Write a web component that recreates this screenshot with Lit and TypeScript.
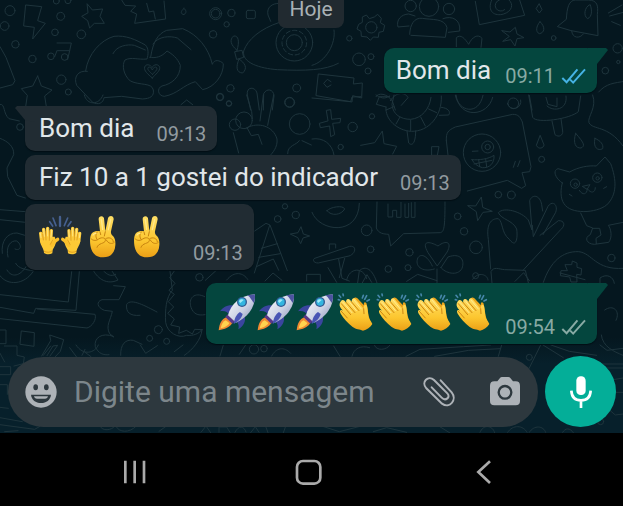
import { LitElement, html, css, svg, nothing } from "lit";
import { customElement, property } from "lit/decorators.js";

type Emoji = "hands" | "victory" | "rocket" | "clap";

interface Message {
  out: boolean;
  tail: boolean;
  time: string;
  text?: string;
  emoji?: Emoji[];
  ticks?: "read" | "delivered";
}

const messages: Message[] = [
  { out: true, tail: true, time: "09:11", text: "Bom dia", ticks: "read" },
  { out: false, tail: true, time: "09:13", text: "Bom dia" },
  { out: false, tail: false, time: "09:13", text: "Fiz 10 a 1 gostei do indicador" },
  { out: false, tail: false, time: "09:13", emoji: ["hands", "victory", "victory"] },
  {
    out: true,
    tail: true,
    time: "09:54",
    emoji: ["rocket", "rocket", "rocket", "clap", "clap", "clap", "clap"],
    ticks: "delivered",
  },
];

const skin = svg`<defs>
  <linearGradient id="skin" x1="0" y1="0" x2="0" y2="1">
    <stop offset="0" stop-color="#ffdf66"/><stop offset=".6" stop-color="#fcc62f"/><stop offset="1" stop-color="#eb9f16"/>
  </linearGradient></defs>`;

const emojiArt = {
  hands: {
    label: "Mãos para cima",
    box: "57 30 132 132",
    art: svg`${skin}
      <g stroke="#46608f" stroke-width="5" stroke-linecap="round">
        <path d="M120 39V66" stroke-width="7"/><path d="M99 42L108 65M143 42L133 65M89 53L98 66M153 53L144 66"/>
      </g>
      <g>${hand()}</g><g transform="translate(241 0) scale(-1 1)">${hand()}</g>`,
  },
  victory: {
    label: "Vitória",
    box: "189 30 132 132",
    art: svg`${skin}
      <path fill="url(#skin)" d="M213 92C209 100 209 122 214 136C220 153 232 160 250 160C272 160 285 146 286 124C287 112 285 103 279 96C274 92 272 88 273 82L281 46C282 34 267 33 264 43L256 82L252 43C250 33 235 35 236 46L240 82C230 79 217 82 213 92Z"/>
      <g fill="none" stroke="#c88410" stroke-width="3" stroke-linecap="round">
        <path d="M240 84L242 92M256 83L253 96M233 83C226 89 226 101 232 107M213 104C220 112 230 110 236 105C246 98 258 102 256 110C254 120 235 116 231 130M257 104C267 98 279 103 280 113M259 108C265 120 277 121 283 115"/>
      </g>
      <path fill="none" stroke="#ffe98e" stroke-width="4" stroke-linecap="round" d="M244 46L248 76M272 47L265 77M219 93C221 89 225 88 228 88"/>`,
  },
  rocket: {
    label: "Foguete",
    box: "54 54 117 117",
    art: svg`<defs>
        <linearGradient id="hull" x1="0" y1="0" x2="1" y2="1">
          <stop offset="0" stop-color="#ffffff"/><stop offset=".55" stop-color="#ccd2e4"/><stop offset="1" stop-color="#8289b2"/>
        </linearGradient></defs>
      <path fill="#3a459f" d="M102 91C82 88 68 97 60 109C73 106 83 111 88 119ZM133 122C139 137 132 152 115 163C119 149 112 141 105 136Z"/>
      <path fill="#f08a32" d="M80 126C64 132 58 147 56 166C73 163 91 158 98 142Z"/>
      <path fill="#ffd34f" d="M77 136C68 140 64 150 62 160C74 157 85 152 88 144Z"/>
      <path fill="#5a3788" d="M83 118L105 139L97 146L76 126Z"/>
      <path fill="url(#hull)" d="M84 121C92 88 121 61 164 58C169 91 145 127 108 143Z"/>
      <path fill="#4c53a0" d="M142 61L164 58C166 66 165 76 161 84C156 78 151 66 142 61Z"/>
      <path fill="#4854b4" d="M120 111C108 119 103 132 101 147C114 140 125 130 128 117Z"/>
      <circle cx="126" cy="81" r="15" fill="#315b91"/><circle cx="126" cy="81" r="11" fill="#34b6e0"/>
      <path fill="#9eeaf6" d="M117 79C119 72 127 71 131 75L121 84Z"/>`,
  },
  clap: {
    label: "Palmas",
    box: "405 54 117 117",
    art: svg`${skin}
      <path fill="none" stroke="#4686a9" stroke-width="5" stroke-linecap="round" d="M417 61L422 67M429 57L430 62M415 74L419 75M490 61L487 69M500 62L494 73M508 74L501 78"/>
      <path fill="#eba51b" d="M459 73C465 64 472 68 477 75L492 91C489 79 500 79 501 92L506 122L511 140L482 157Z"/>
      <path fill="url(#skin)" d="M423 78C428 71 434 77 439 83C436 72 445 68 451 76L455 81C454 69 463 66 469 75L491 101C490 88 501 85 502 98L505 124C506 132 514 139 517 147C512 157 500 164 489 167C478 162 469 164 458 156C444 145 430 130 422 116C416 106 424 102 430 108C417 96 416 87 423 78Z"/>
      <path fill="none" stroke="#cc8510" stroke-width="3" stroke-linecap="round" d="M424 86L452 119M438 82L465 113M454 80L477 107M424 109L442 129M491 101L492 116"/>
      <path fill="none" stroke="#ffea94" stroke-width="3" stroke-linecap="round" d="M429 82L456 113M445 77L469 107M462 75L484 102"/>`,
  },
};

function hand() {
  return svg`<path fill="#fcc935" d="M62 100L104 98L108 112C106 128 100 132 98 138L97 148C90 152 79 152 72 147C72 134 62 126 60 112Z"/>
    <path fill="none" stroke="#fdcb3a" stroke-width="10" stroke-linecap="round" d="M62 88L65 112M71 76L74 108M83 73L83 106M94 80L92 110"/>
    <path fill="none" stroke="#f9bf2c" stroke-width="10" stroke-linecap="round" stroke-linejoin="round" d="M113 106C105 109 101 118 95 124"/>
    <path fill="none" stroke="#ffe583" stroke-width="3" stroke-linecap="round" d="M61 87L63 101M71 75L73 97M83 72V96M95 79L93 99"/>
    <path fill="none" stroke="#d28d15" stroke-width="2" stroke-linecap="round" d="M68 90L70 108M77 82L78 108M89 82L88 109M98 108L91 121M73 142C80 146 90 146 96 141"/>`;
}

const ticks = (kind: string) => html`<svg class="ticks ${kind}" viewBox="747 201 76 54" role="img"
  aria-label=${kind === "read" ? "Lida" : "Entregue"}>
  <path d="M751 234L764 247L797 208M775 239L784 248L820 208"/></svg>`;

/* Line doodles of the chat background, each group drawn at three units per pixel. */
const wallpaper = html`<svg class="wallpaper" viewBox="0 0 623 433" preserveAspectRatio="xMinYMax slice" aria-hidden="true">
  <g transform="scale(.33333)">
    <path d="M78 15L125 20L113 62L136 70L98 117L103 82L72 78ZM262 12L277 30L308 27L300 49L313 70L283 70L269 84L263 62L245 49L263 39ZM365 0L375 16L407 18L392 34L410 42L404 70L497 57L492 3M440 10L447 36L461 33L466 57M0 140L18 172L45 242L38 254L0 264"/>
    <path d="M113 228L124 258L156 270L134 288L139 320M113 228L98 258L64 266L82 286L77 320M171 129H214L209 152H173M209 152L203 178M171 152L164 170"/>
    <circle cx="30" cy="32" r="15"/><circle cx="14" cy="78" r="13"/><circle cx="182" cy="49" r="12"/><circle cx="165" cy="97" r="10"/><circle cx="244" cy="103" r="13"/><circle cx="46" cy="133" r="11"/><circle cx="97" cy="177" r="11"/><circle cx="153" cy="169" r="10"/><circle cx="194" cy="171" r="10"/><circle cx="184" cy="239" r="14"/><circle cx="205" cy="276" r="9"/><circle cx="169" cy="3" r="9"/><circle cx="204" cy="2" r="9"/>
    <path d="M257 212C264 162 302 120 342 109C378 105 407 119 436 135C447 145 445 165 441 177C414 180 395 170 375 180C365 195 370 225 391 243C420 257 455 247 460 270C463 289 450 296 427 297L365 289L312 293C310 309 295 316 278 307L230 256C220 232 233 210 262 214M339 161C350 137 383 132 403 136L436 150M452 171C459 125 474 101 500 91L548 86C594 104 626 145 637 193C642 177 660 180 670 191C671 225 644 262 608 269L586 245C550 255 533 282 493 289C473 288 470 264 486 258C515 252 541 232 541 196C533 175 517 162 501 153C485 171 467 175 449 172M459 132C475 108 510 107 532 114L573 149"/>
    <path d="M457 234C443 222 431 212 434 201C438 190 452 194 456 203C461 192 476 191 479 202C481 213 466 223 457 234ZM457 223C448 214 440 208 445 202C450 199 455 206 457 210C460 201 469 199 471 204C472 211 464 216 457 223Z"/>
    <circle cx="647" cy="41" r="18"/><circle cx="647" cy="41" r="13"/><circle cx="694" cy="39" r="11"/><circle cx="680" cy="73" r="8"/><circle cx="639" cy="103" r="11"/><rect x="739" y="31" width="27" height="25" rx="5"/>
    <path d="M552 25C540 35 542 42 552 44C560 38 560 32 552 25M836 68C782 86 743 118 731 153C725 189 780 205 832 209C917 213 975 211 1015 190M711 151C691 134 688 119 701 108C716 106 719 125 711 151ZM705 155L726 151L731 172L711 178ZM717 177C707 201 709 218 728 219C744 204 735 189 717 177M837 10C816 10 799 22 804 45L812 64"/>
    <circle cx="883" cy="128" r="55"/><circle cx="883" cy="128" r="37" stroke-dasharray="13 8"/><circle cx="883" cy="128" r="24"/>
    <circle cx="691" cy="265" r="11"/><circle cx="660" cy="291" r="11"/><circle cx="687" cy="311" r="8"/><circle cx="890" cy="264" r="12"/><circle cx="869" cy="307" r="15"/>
    <path d="M752 330L742 285C738 259 766 259 771 279L778 330M790 330L791 281C800 264 820 267 822 287L817 330M543 314L560 300L578 314"/>
  </g>
  <g transform="translate(312) scale(.33333)">
    <path d="M164 46L172 56L187 51L197 43L208 55L205 68L218 76L214 94L201 97L199 112L184 111L175 121L165 111L148 109L147 94L135 87L140 73L151 67L151 52Z"/>
    <circle cx="178" cy="82" r="17"/><circle cx="112" cy="115" r="8"/><circle cx="141" cy="178" r="19"/><circle cx="177" cy="170" r="9"/><circle cx="168" cy="213" r="9"/><circle cx="296" cy="18" r="17"/><circle cx="411" cy="27" r="17"/><circle cx="351" cy="20" r="29"/>
    <path d="M293 103C294 73 307 52 331 55C360 60 398 54 405 83L400 112L297 106M291 78L258 81C252 60 267 43 290 42L309 48M393 56C419 46 447 58 443 93L409 97M433 140V113C446 101 459 116 470 133C480 111 498 100 510 115L507 142M490 4L502 74L638 46L623 0M539 0C524 35 548 50 575 42C600 34 606 13 591 0M562 0A17 17 0 1 0 578 29M737 79L763 58C765 22 771 1 790 0H829C857 1 859 17 856 44L858 107L778 92ZM779 93C781 115 803 117 814 102M835 15C841 32 840 50 827 56C813 48 818 21 832 15Z"/>
    <path d="M570 92L594 96L610 82L615 102L636 113L615 116L609 138L596 119L572 124L591 110ZM684 65C672 79 670 96 682 101C697 99 702 82 684 65M682 12L690 29L682 39L673 27Z"/><circle cx="725" cy="114" r="7"/><circle cx="917" cy="145" r="14"/><circle cx="880" cy="212" r="10"/><circle cx="919" cy="186" r="5"/>
    <path d="M20 222L126 234L124 252L151 249L149 294L122 287L120 306L13 287ZM57 245L46 238L35 250L45 262L57 255M192 290C199 277 225 280 241 303L250 330M235 302C252 274 280 276 288 293L268 316M430 286C440 336 500 348 513 286M586 310A20 20 0 1 0 626 300M652 286L660 330M735 294V320L708 313L702 292M860 276C882 250 908 249 938 244M889 39L930 15M893 48L934 37M899 65L925 76"/>
    <path d="M66 90C72 130 42 185 0 196"/>
  </g>
  <g transform="translate(312 95) scale(.33333)">
    <path d="M0 9L116 20L120 6L146 5M44 46L56 44L59 73L86 70L84 83L62 85L68 119L56 125L53 93L25 98L22 85L47 78ZM146 151L188 143L211 108L216 146L254 154L242 177M192 0C215 15 223 8 232 3M222 36L193 28L202 5L233 5M222 36C218 73 256 107 298 109C351 110 391 62 388 3M246 0L240 28C242 59 267 73 296 73C329 70 353 42 357 7M246 35L222 45M264 66L252 87M296 75V107M326 66L340 93M350 42L374 53M285 108L290 144C300 154 311 146 311 108M382 61L410 60C417 50 408 39 388 37M432 0C442 75 529 64 542 7"/>
    <circle cx="180" cy="64" r="8"/><circle cx="122" cy="96" r="14"/><circle cx="86" cy="156" r="8"/><circle cx="604" cy="25" r="16"/><circle cx="689" cy="193" r="9"/><circle cx="510" cy="173" r="56"/><circle cx="527" cy="156" r="18"/><circle cx="527" cy="156" r="8"/>
    <path d="M0 132C35 126 61 148 66 180M360 155H381L376 181H360ZM403 137C402 112 408 106 430 96L602 58C620 58 624 66 631 81L657 215L653 230L630 233L641 272L629 280L586 256L466 288M403 137L408 180M481 169L498 168M480 194C500 196 530 192 546 181C548 205 532 220 511 218C496 214 486 206 480 194ZM486 207L540 196M500 194L503 215M521 192L524 215M604 217L610 199M617 215L624 197M650 0L662 67C673 87 774 72 799 50L806 3M720 78L729 119C741 129 754 120 752 108L747 71M762 3C768 45 724 51 705 33M684 122L673 151C680 165 695 159 696 151ZM791 115C782 145 791 160 807 159C819 153 819 147 791 115ZM849 130C842 158 858 169 872 161C875 149 867 138 849 130ZM842 0C856 38 825 66 831 83C842 106 888 89 933 153"/>
    <path d="M751 264C728 248 722 226 738 221L773 231C799 216 830 211 853 213L879 186L896 206C914 255 916 299 884 330C852 355 776 359 756 326C744 310 746 280 751 264ZM802 286C812 302 825 299 826 281C837 297 850 293 850 278M812 274L834 269L826 282ZM772 298L780 303M875 280L884 275"/>
    <circle cx="789" cy="266" r="14"/><circle cx="856" cy="248" r="14"/><circle cx="791" cy="269" r="5"/><circle cx="857" cy="250" r="5"/>
    <path d="M806 354L824 392L842 399L835 419C815 428 824 447 847 448L890 442C902 427 897 401 889 391L933 382M842 400H863L867 420L852 430L853 446M468 332L491 333L508 306L512 337L541 349L513 352L497 377L493 351ZM195 321L193 399C200 416 215 417 230 418L236 453L275 416L385 413C396 410 399 400 399 321M228 327V366H242V346H254V367H267V322M279 327V367H290V325M298 323V367H309V322M0 352C22 411 140 425 142 325M45 347C58 365 88 360 98 342C94 330 55 335 45 347Z"/>
    <path d="M536 522L529 433C522 388 537 370 559 371C574 382 567 413 592 433C616 465 617 419 614 402C602 375 568 374 559 353C575 335 628 349 649 375L660 405L653 317C661 296 684 300 689 329L692 348M661 391L664 425L708 334C722 314 739 330 731 352L693 419M684 421L739 377C757 376 761 391 747 403L633 526M540 565L537 530C545 514 560 522 577 524L640 526L649 563"/>
    <path d="M375 512L348 473C327 436 351 438 378 453C403 434 421 441 406 470ZM367 522C328 534 307 511 318 488C329 472 349 487 361 513M387 518L408 486C446 472 459 496 450 520C436 546 398 533 387 518ZM375 522V565M8 490L113 454C136 451 131 477 111 483L19 504C0 504 3 490 8 490M52 463V447H71V459M80 493L90 550L112 558M98 490L82 548M48 518L74 562M136 570L142 527C160 511 182 520 196 567M150 565L165 539L179 562M694 562C715 500 751 468 800 470C841 474 850 526 933 520M760 509H779L781 498L795 504V517L809 521L807 540L794 538L795 561H777L773 546L745 542L747 527L765 527Z"/>
    <circle cx="559" cy="299" r="10"/><circle cx="598" cy="300" r="12"/><circle cx="437" cy="364" r="10"/><circle cx="456" cy="409" r="11"/><circle cx="492" cy="457" r="19"/><circle cx="164" cy="406" r="16"/><circle cx="176" cy="463" r="10"/><circle cx="292" cy="472" r="11"/><circle cx="229" cy="522" r="10"/><circle cx="288" cy="518" r="9"/><circle cx="491" cy="542" r="9"/><circle cx="898" cy="489" r="11"/>
  </g>
  <g transform="translate(0 95) scale(.33333)">
    <path d="M0 28C17 26 8 55 27 71L58 78M0 130C24 139 43 155 41 179L21 219L23 245L51 301L76 309M0 344L76 350M0 374L76 382M253 0C260 32 298 31 309 0M7 475C2 439 22 413 51 414L78 422M24 486C16 455 32 435 50 438C69 451 61 470 45 462M47 505C56 522 79 524 99 527"/>
    <circle cx="60" cy="96" r="10"/><circle cx="660" cy="6" r="10"/><circle cx="687" cy="25" r="8"/><circle cx="869" cy="22" r="14"/><circle cx="705" cy="89" r="17"/><circle cx="732" cy="76" r="25"/><circle cx="899" cy="87" r="31"/>
    <path d="M740 0L755 50L757 71M821 0L803 91M790 0L780 78M700 113L716 174M741 98C775 80 820 93 831 132C834 157 816 175 811 181M741 98L754 122L775 118L786 148M863 176C862 150 890 151 898 137M906 137L934 150"/>
    <circle cx="855" cy="334" r="8"/><circle cx="833" cy="372" r="10"/><circle cx="887" cy="360" r="11"/>
    <path d="M872 417L894 413L903 395L910 417L929 423L909 429L902 446L894 429ZM764 408L798 385L810 390L862 527M809 391L763 534M784 460L832 446M776 487L841 476M769 515L820 492L836 526"/>
  </g>
  <g transform="translate(0 260) scale(.33333)">
    <path d="M0 47C22 78 73 75 99 35M21 30C35 55 61 48 78 20M0 104L205 126L215 35M0 142L101 160L107 145L228 151L238 35M112 147L285 163C291 178 276 200 261 204L0 176M0 210H18V251H0M65 213L103 218L102 259L61 253ZM13 258H51V286L73 291L70 311L42 318M0 280L14 306"/>
    <path d="M281 33C294 56 321 76 354 60L336 33M311 33C322 44 332 51 347 43M341 77L376 80L357 119H306C288 125 291 142 313 151L337 154C332 180 316 198 329 221L341 231M340 229C305 216 281 234 286 260C295 281 310 286 327 284M362 286C361 253 376 237 400 241L426 253M471 156C438 139 393 113 380 133C377 156 389 169 420 166M125 288L152 242L149 225L191 239L181 274L166 290M141 287L159 258L173 256L150 288M209 263L229 290M254 276L273 290M246 286L255 268"/>
    <path d="M510 33L517 91C498 112 495 150 497 187C501 217 535 237 560 226C580 228 598 221 606 208C604 239 578 269 553 286M523 33L509 53L525 70L507 91L523 103L505 125L521 141L503 160L523 177L512 195L539 201L536 220L559 211L577 222L584 208L607 209M614 110C583 94 564 115 573 142C580 161 592 168 615 164"/>
    <circle cx="475" cy="209" r="12"/><circle cx="449" cy="235" r="9"/><circle cx="500" cy="244" r="9"/><circle cx="598" cy="52" r="11"/>
    <path d="M616 61L650 30M680 60C704 31 730 38 743 58M795 63L819 39L846 61M920 63V43H961V64M1040 60C1048 22 1090 20 1100 56M1220 64L1253 43L1311 62M1418 58C1436 32 1464 45 1464 60M1545 64L1571 38L1588 62M1680 39L1755 59M1800 84V54C1820 40 1840 49 1843 70M1814 150C1840 131 1862 154 1848 181M1804 225C1808 260 1840 274 1869 286"/>
  </g>
  <g transform="translate(0 345) scale(.33333)">
    <path d="M0 65H32V89H0M0 119H22V148M0 187L25 190M0 218L67 230M0 239L104 253L120 244M14 260L54 257M301 244C306 259 335 257 345 243M348 244C357 263 388 265 409 243M477 259L498 244M603 262L618 243L632 263M657 262V246H680L690 262M705 262C716 240 732 242 738 261M752 263L766 245L777 262M797 244L804 263M850 263L857 244M130 31L152 3M228 0C250 34 285 24 295 0M421 0L437 25L472 2M523 20L549 0M660 33L670 0M718 28L737 0M815 33C828 8 852 3 872 25"/>
    <circle cx="762" cy="13" r="14"/><circle cx="792" cy="11" r="10"/>
    <path d="M968 244L1018 260L1080 244M1120 260L1160 248L1220 262M1321 246L1350 264M1440 262C1449 238 1477 239 1484 263M1523 262C1538 238 1570 240 1581 262M1588 262C1602 239 1631 242 1637 262M1688 262C1696 248 1710 248 1720 263M1001 3L1020 34M1056 34C1061 10 1083 0 1109 8M1123 0C1129 19 1160 16 1170 0M1218 34L1260 13L1390 5L1472 0M1304 34L1406 16L1501 11M1505 0L1495 34M1622 0L1576 93M1629 0L1690 38M1653 0L1708 19L1790 31M1806 57H1869M1778 90L1804 69H1869M1834 105L1869 99M1831 142H1869M1819 187L1846 210L1869 207M1800 0L1821 16L1869 10"/>
    <circle cx="1588" cy="37" r="9"/><circle cx="1802" cy="230" r="9"/>
  </g>
</svg>`;

@customElement("chat-bubble")
export class ChatBubble extends LitElement {
  @property({ attribute: false }) message!: Message;

  static styles = css`
    :host { display: flex; }
    .bubble {
      position: relative;
      display: flex;
      align-items: flex-end;
      gap: 22px;
      max-width: 80%;
      padding: 7px 11px 5px 14px;
      border-radius: 10px;
      background: #212c33;
      color: #e1e7ea;
      box-shadow: 0 1px 1px #020e14;
    }
    .out {
      margin-left: auto;
      gap: 14px;
      padding-left: 12px;
      background: #04463e;
    }
    .tail::before {
      content: "";
      position: absolute;
      top: 0;
      left: -10px;
      width: 20px;
      height: 16px;
      background: inherit;
      clip-path: polygon(2px 0, 20px 0, 20px 16px, 10px 14px, 0 2px);
    }
    .out.tail::before {
      left: auto;
      right: -11px;
      clip-path: polygon(0 0, 18px 0, 20px 2px, 9px 16px, 0 16px);
    }
    .text {
      margin: 0;
      padding-bottom: 3px;
      font-size: 26px;
      line-height: 30px;
    }
    .emoji { display: flex; padding: 3px 0 7px; }
    .emoji svg { width: 44px; height: 44px; }
    .out .emoji svg { width: 39px; height: 39px; }
    .meta {
      display: flex;
      align-items: center;
      gap: 6px;
      font-size: 20px;
      line-height: 24px;
      color: #929ba0;
    }
    .out .meta { color: #88aaa4; }
    .ticks {
      width: 25px;
      height: 18px;
      fill: none;
      stroke: #88aaa4;
      stroke-width: 6;
    }
    .read { stroke: #45b2e4; }
  `;

  render() {
    const m = this.message;
    return html`<div class="bubble ${m.out ? "out" : ""} ${m.tail ? "tail" : ""}">
      ${m.text ? html`<p class="text">${m.text}</p>` : nothing}
      ${m.emoji
        ? html`<div class="emoji">${m.emoji.map(
            (e) => html`<svg viewBox=${emojiArt[e].box} role="img" aria-label=${emojiArt[e].label}>${emojiArt[e].art}</svg>`
          )}</div>`
        : nothing}
      <div class="meta"><time>${m.time}</time>${m.ticks ? ticks(m.ticks) : nothing}</div>
    </div>`;
  }
}

@customElement("app-root")
export class AppRoot extends LitElement {
  static styles = css`
    :host {
      display: flex;
      flex-direction: column;
      height: 100vh;
      overflow: hidden;
      background: #000;
      font-family: Roboto, "Liberation Sans", sans-serif;
    }
    button {
      display: grid;
      place-items: center;
      flex: none;
      padding: 0;
      border: 0;
      background: none;
      color: inherit;
    }
    .chat {
      position: relative;
      display: flex;
      flex-direction: column;
      flex: 1;
      min-height: 0;
      overflow: hidden;
      background: linear-gradient(#05171f 78%, #07202b 84%);
    }
    .wallpaper {
      position: absolute;
      inset: 0;
      width: 100%;
      height: 100%;
      fill: none;
      stroke: #1e343c;
      stroke-width: 3;
      stroke-linejoin: round;
      stroke-linecap: round;
    }
    .messages {
      position: relative;
      display: flex;
      flex-direction: column;
      justify-content: flex-end;
      flex: 1;
      min-height: 0;
      padding: 0 26px 12px 25px;
    }
    .day {
      align-self: center;
      flex: none;
      margin-bottom: 20px;
      padding: 10px 11px;
      border-radius: 8px;
      background: #212a30;
      color: #a9b1b5;
      font-size: 21px;
      line-height: 18px;
    }
    chat-bubble { flex: none; margin-top: 4px; }
    .turn { margin-top: 13px; }
    .day + chat-bubble { margin-top: 0; }
    .composer {
      position: relative;
      display: flex;
      align-items: center;
      gap: 7px;
      padding: 0 7px 6px 8px;
    }
    .field {
      display: flex;
      align-items: center;
      flex: 1;
      min-width: 0;
      height: 70px;
      padding: 0 16px;
      box-sizing: border-box;
      border-radius: 35px;
      background: #2d383e;
      color: #adb2b7;
    }
    .field svg { width: 34px; height: 34px; }
    .field input {
      flex: 1;
      min-width: 0;
      height: 40px;
      margin-left: 16px;
      padding: 0;
      border: 0;
      outline: 0;
      background: none;
      color: #e1e7ea;
      font: 30px/40px Roboto, "Liberation Sans", sans-serif;
    }
    .field input::placeholder { color: #7c868b; opacity: 1; }
    .camera { margin-left: 32px; }
    .mic {
      width: 71px;
      height: 71px;
      border-radius: 50%;
      background: #04ae98;
      color: #fff;
    }
    .mic svg { width: 34px; height: 34px; }
    .nav {
      display: flex;
      justify-content: space-around;
      padding: 14px 52px 9px 48px;
      color: #aaa;
    }
    .nav button { width: 50px; height: 50px; }
    .nav svg { width: 30px; height: 30px; }
    .line { fill: none; stroke: currentColor; }
    .solid { fill: currentColor; }
  `;

  render() {
    return html`
      <main class="chat">
        ${wallpaper}
        <section class="messages" aria-label="Conversa">
          <div class="day">Hoje</div>
          ${messages.map((m) => html`<chat-bubble class=${m.tail ? "turn" : ""} .message=${m}></chat-bubble>`)}
        </section>
        <form class="composer" @submit=${(e: Event) => e.preventDefault()}>
          <div class="field">
            <button type="button" aria-label="Emoji">
              <svg viewBox="70 87 102 102"><circle class="solid" cx="121" cy="138" r="47"/>
                <g fill="#2d383e"><ellipse cx="105" cy="124" rx="7" ry="9"/><ellipse cx="137" cy="124" rx="7" ry="9"/>
                <path d="M91 146H151C149 162 137 171 121 171S93 162 91 146Z"/></g>
                <path class="solid" d="M100 151H142C141 156 138 158 133 158H109C104 158 101 156 100 151Z"/></svg>
            </button>
            <input type="text" aria-label="Mensagem" placeholder="Digite uma mensagem" />
            <button type="button" aria-label="Anexar">
              <svg viewBox="328 87 102 102"><path class="line" stroke-width="6" stroke-linecap="round"
                d="M384 103L417 139C434 160 412 190 388 173L341 127C324 108 347 86 364 102L404 142C415 153 399 167 387 155L357 124"/></svg>
            </button>
            <button class="camera" type="button" aria-label="Câmera">
              <svg viewBox="528 84 102 102"><path class="solid" d="M547 103H556L564 93Q566 90 570 90H589Q593 90 595 93L603 103H611Q624 103 624 116V162Q624 175 611 175H547Q534 175 534 162V116Q534 103 547 103Z"/>
                <circle cx="579" cy="136" r="19" fill="none" stroke="#2d383e" stroke-width="7"/></svg>
            </button>
          </div>
          <button class="mic" type="button" aria-label="Gravar áudio">
            <svg viewBox="754 87 102 102"><rect class="solid" x="791" y="91" width="28" height="56" rx="13"/>
              <path class="line" stroke-width="8" d="M776 134C777 154 789 163 805 163S833 154 834 134M805 163V186"/></svg>
          </button>
        </form>
      </main>
      <nav class="nav" aria-label="Sistema">
        <button type="button" aria-label="Recentes">
          <svg viewBox="360 335 90 90"><path class="line" stroke-width="8" d="M376 346V414M404 346V414M432 346V414"/></svg>
        </button>
        <button type="button" aria-label="Início">
          <svg viewBox="0 0 90 90"><rect class="line" stroke-width="8" x="9" y="12" width="70" height="68" rx="18"/></svg>
        </button>
        <button type="button" aria-label="Voltar">
          <svg viewBox="470 335 90 90"><path class="line" stroke-width="8" d="M533 348L498 380L533 413"/></svg>
        </button>
      </nav>
    `;
  }
}
